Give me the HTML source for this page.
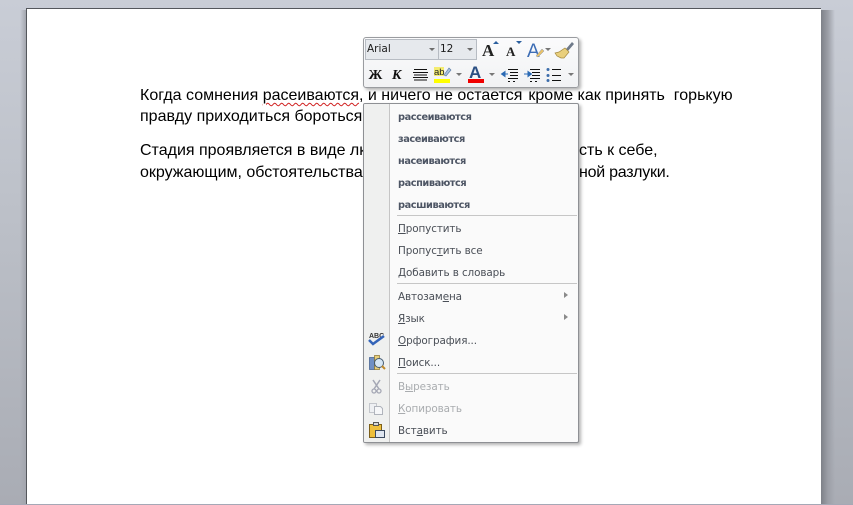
<!DOCTYPE html>
<html><head><meta charset="utf-8">
<style>
html,body{margin:0;padding:0}
body{width:853px;height:505px;overflow:hidden;position:relative;background:linear-gradient(180deg,#c9cdd6 0,#bdc1c9 200px,#a9acb4 505px);font-family:"Liberation Sans",sans-serif}
.a{position:absolute;white-space:nowrap}
#shadowr{left:821px;top:10px;width:14px;height:495px;background:linear-gradient(90deg,#7e8188,#9c9fa7 50%,rgba(160,163,172,0))}
#shadowl{left:20px;top:10px;width:6px;height:495px;background:linear-gradient(270deg,#a3a6ae,rgba(180,184,192,0))}
#paper{left:26px;top:8px;width:795px;height:497px;background:#fff;border-top:1px solid #54575c;border-left:1px solid #54575c;box-sizing:border-box}
#bot{left:0;top:504px;width:853px;height:1px;background:#a5a8b6}
.t{font-size:16px;line-height:20px;color:#000;left:140px}
.w{position:absolute;display:inline-block}
#tb{left:363px;top:37px;width:214px;height:49px;border:1px solid #9a9ca0;border-radius:3px;background:linear-gradient(180deg,#fbfbfc,#f1f2f4);box-shadow:2px 2px 3px rgba(0,0,0,.3)}
.combo{position:absolute;top:1px;height:19px;border:1px solid #b7bcc3;background:#e6e9ed;font:10.5px/18px "DejaVu Sans",sans-serif;color:#1c1c1c}
.tri{position:absolute;width:0;height:0;border-left:3px solid transparent;border-right:3px solid transparent;border-top:3px solid #6d6d6d}
#menu{left:363px;top:103px;width:214px;height:338px;border:1px solid #8e9094;border-radius:2px;background:#fafafa;box-shadow:2px 2px 3px rgba(0,0,0,.3);overflow:hidden}
#gut{position:absolute;left:0;top:0;width:25px;height:338px;background:#eff0ef;border-right:1px solid #c5c5c5}
.m{position:absolute;left:34px;font:10.4px/14px "DejaVu Sans",sans-serif;color:#4a4f57;white-space:nowrap;letter-spacing:-.1px}
.b{font-weight:bold;color:#4d5564;font-size:9.8px;letter-spacing:-.45px}
.d{color:#a9acaf}
.sep{position:absolute;left:33px;width:180px;height:1px;background:#c6c6c6}
.arr{position:absolute;left:200px;width:0;height:0;border-top:3.5px solid transparent;border-bottom:3.5px solid transparent;border-left:4px solid #8a8a8a}
u{text-underline-offset:1px}
</style></head><body>
<div class="a" id="shadowr"></div><div class="a" id="shadowl"></div>
<div class="a" id="paper"></div>
<div class="a" id="bot"></div>

<div class="a t" style="top:86px">Когда сомнения <span style="text-decoration:underline wavy #d02020 1px;text-underline-offset:2px">расеиваются</span>, и ничего не остается <span style="margin-left:1.5px">кроме как принять&nbsp; горькую</span></div>
<div class="a t" style="top:107px">правду приходиться бороться</div>
<div class="a t" style="top:141px">Стадия проявляется в виде лк</div>
<div class="a" style="left:579px;top:141px;font-size:16px;line-height:20px">сть к себе,</div>
<div class="a t" style="top:163px">окружающим, обстоятельства</div>
<div class="a" style="left:579px;top:163px;font-size:16px;line-height:20px;letter-spacing:-.25px">ной разлуки.</div>

<div class="a" id="tb">
  <div class="combo" style="left:1px;width:72px"><span style="margin-left:1px">Arial</span><i class="tri" style="left:63px;top:8px"></i></div>
  <div class="combo" style="left:74px;width:37px"><span style="margin-left:1px">12</span><i class="tri" style="left:28px;top:8px"></i></div>
  <svg class="w" style="left:0;top:0" width="214" height="49" viewBox="0 0 214 49">
    <text x="118" y="18" font-family="Liberation Serif" font-size="17" fill="#222" font-weight="bold">A</text>
    <path d="M129 6l3-3 3 3z" fill="#2b5f9e"/>
    <text x="142" y="18" font-family="Liberation Serif" font-size="13" fill="#222" font-weight="bold">A</text>
    <path d="M152 3h6l-3 3z" fill="#2b5f9e"/>
    <text x="163" y="19" font-family="Liberation Sans" font-size="19" fill="#3d6db5">A</text>
    <path d="M172 18l6-7 2 2-6 6z" fill="#e8c26a" stroke="#8a94a8" stroke-width=".5"/>
    <path d="M181 10h6l-3 3z" fill="#777"/>
    <path d="M208 4l2 2-6 7-2-2z" fill="#6f7a8a"/>
    <path d="M201 10l4 4-5 6-3 0-4-2-2-3 4-1z" fill="#e9cf7c" stroke="#a58a40" stroke-width=".7"/>
    <text x="4.500" y="41" font-family="Liberation Serif" font-size="14" font-weight="bold" fill="#111">Ж</text>
    <text x="28" y="41" font-family="Liberation Serif" font-size="14" font-weight="bold" font-style="italic" fill="#111">К</text>
    <path d="M50 31.500h13M49 34.500h15M50 37h13M49 39.500h15M50 42h13" stroke="#111" fill="none"/>
    <rect x="70" y="29" width="10" height="9" fill="#f4ec70"/>
    <text x="70" y="37" font-family="Liberation Sans" font-size="9.500" fill="#222">ab</text>
    <path d="M80 37l5-7 2 2-5 6z" fill="#a9c0dc" stroke="#5578a5" stroke-width=".6"/>
    <rect x="70" y="41" width="16" height="4" fill="#ffff00"/>
    <path d="M92 35h6l-3 3z" fill="#777"/>
    <text x="105" y="40" font-family="Liberation Sans" font-size="17" font-weight="bold" fill="#2b4f83">A</text>
    <rect x="104" y="41" width="16" height="4" fill="#f00000"/>
    <path d="M125 35h6l-3 3z" fill="#777"/>
    <path d="M144 31.500h10M146 34.500h8M146 37.500h8M144 40.500h10" stroke="#111"/>
    <path d="M138 36h6M141 33.500l-3.500 2.500 3.500 2.500z" stroke="#2a6ab5" fill="#2a6ab5"/>
    <path d="M144 43.500h2M149 43.500h2" stroke="#111"/>
    <path d="M166 31.500h10M168 34.500h8M168 37.500h8M166 40.500h10" stroke="#111"/>
    <path d="M160 36h6M164 33.500l3.500 2.500-3.500 2.500z" stroke="#2a6ab5" fill="#2a6ab5"/>
    <path d="M166 43.500h2M171 43.500h2" stroke="#111"/>
    <path d="M188 31.500h9M188 37.500h9M188 42.500h9" stroke="#111"/>
    <circle cx="184" cy="31.500" r="1.500" fill="#3b6cab"/><circle cx="184" cy="37.500" r="1.500" fill="#3b6cab"/><circle cx="184" cy="42.500" r="1.500" fill="#3b6cab"/>
    <path d="M204 35h6l-3 3z" fill="#777"/>
  </svg>
</div>

<div class="a" id="menu">
  <div id="gut"></div>
  <div class="m b" style="top:7px">рассеиваются</div>
  <div class="m b" style="top:29px">засеиваются</div>
  <div class="m b" style="top:51px">насеиваются</div>
  <div class="m b" style="top:73px">распиваются</div>
  <div class="m b" style="top:95px">расшиваются</div>
  <div class="sep" style="top:111px"></div>
  <div class="m" style="top:118px"><u>П</u>ропустить</div>
  <div class="m" style="top:140px">Пропус<u>т</u>ить все</div>
  <div class="m" style="top:162px"><u>Д</u>обавить в словарь</div>
  <div class="sep" style="top:179px"></div>
  <div class="m" style="top:186px">Автозам<u>е</u>на</div><i class="arr" style="top:188px"></i>
  <div class="m" style="top:208px"><u>Я</u>зык</div><i class="arr" style="top:210px"></i>
  <div class="m" style="top:230px"><u>О</u>рфография...</div>
  <div class="m" style="top:252px"><u>П</u>оиск...</div>
  <div class="sep" style="top:269px"></div>
  <div class="m d" style="top:276px">В<u>ы</u>резать</div>
  <div class="m d" style="top:298px"><u>К</u>опировать</div>
  <div class="m" style="top:320px">Вст<u>а</u>вить</div>
  <svg class="w" style="left:0;top:220px" width="25" height="118" viewBox="0 0 25 118">
    <text x="5" y="14" font-family="Liberation Sans" font-size="7" font-weight="bold" fill="#333">ABC</text>
    <path d="M5 16l4 4 11-8" stroke="#3464b8" stroke-width="2.500" fill="none"/>
    <rect x="5.500" y="33.500" width="5" height="12" fill="#6f8fc4" stroke="#3c5a8c" stroke-width=".7"/>
    <rect x="10.500" y="31.500" width="5" height="14" fill="#e8cf7a" stroke="#8a6f2c" stroke-width=".7"/>
    <circle cx="15" cy="39" r="4.500" fill="#d6e6f4" stroke="#445a70"/>
    <path d="M18 42l3 3" stroke="#c08a2a" stroke-width="2"/>
    <path d="M9 56l6 9M16 56l-6 9" stroke="#a5a8b5" stroke-width="1.500"/>
    <circle cx="10" cy="67" r="2" fill="none" stroke="#a5a8b5" stroke-width="1.300"/><circle cx="15" cy="67" r="2" fill="none" stroke="#a5a8b5" stroke-width="1.300"/>
    <path d="M5.500 79.500h7v9h-7z" fill="#eef0f3" stroke="#c3c6cc"/>
    <path d="M10.500 82.500h6l2 2v6h-8z" fill="#f6f7f9" stroke="#b0b4bc"/>
    <rect x="5.500" y="100.500" width="12" height="13" fill="#eebf3c" stroke="#7c5f1a"/>
    <rect x="9.500" y="98.500" width="5" height="3" fill="#d8d8d8" stroke="#555"/>
    <path d="M11.500 106.500h9v7h-9z" fill="#dfe6f0" stroke="#3c4a60"/>
  </svg>
</div>
</body></html>
